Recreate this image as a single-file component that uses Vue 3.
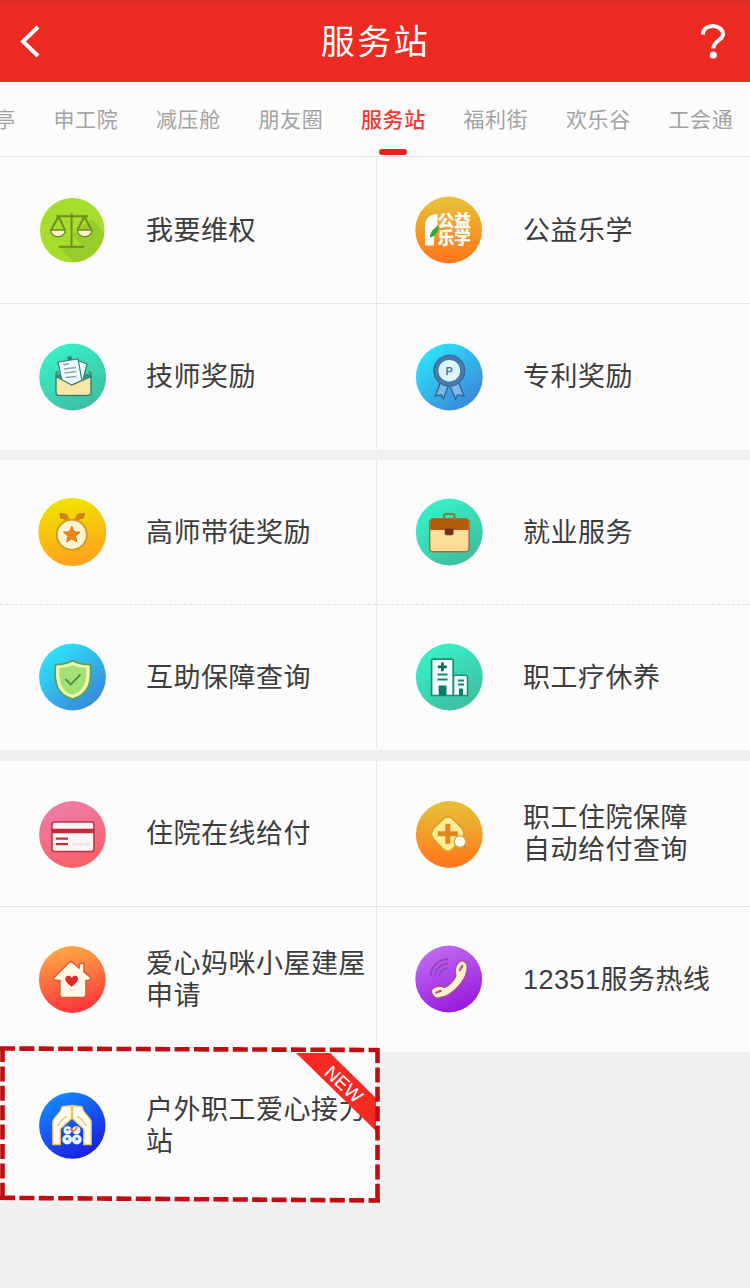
<template>
  <div class="page">
    <svg class="sprite" width="0" height="0" aria-hidden="true">
      <defs>
        <linearGradient v-for="g in gradients" :id="`g-${g.id}`" :key="g.id" :x1="g.x" y1="0" :x2="1 - g.x" y2="1">
          <stop offset="0.08" :stop-color="g.from" />
          <stop offset="0.92" :stop-color="g.to" />
        </linearGradient>
      </defs>

      <symbol id="i-scale" viewBox="0 0 68 68">
        <circle cx="34.3" cy="34.3" r="32.3" fill="#a6dc2c" />
        <path d="M54 23 66 37a32.3 32.3 0 0 1-30 29L21 51h25L34 39Z" fill="#8fc32b" opacity=".65" />
        <path d="M12.7 34h14.6c0 9-14.6 9-14.6 0ZM39.3 34h14.6c0 9-14.6 9-14.6 0Z" fill="#fff3c8" stroke="#728a22" stroke-width="1.4" />
        <path d="M18.5 20.3H50M33.6 17.3v33.2M20.7 20.3 13 34M20.7 20.3 27 34M46.3 20.3 39.6 34M46.3 20.3 53.6 34M20.7 50.7H46" fill="none" stroke="#728a22" stroke-width="1.9" />
      </symbol>

      <symbol id="i-study" viewBox="0 0 68 68">
        <circle cx="33.7" cy="34" r="33.4" fill="url(#g-orange)" />
        <path d="M10 49.5V30c0-7 4-11.8 12.5-12v11c-4 4-3 8-3.5 20.5Z" fill="#fff" />
        <path d="M15 41.5c0-5 3-9 8.5-11.5 0 6-2.5 10-8.5 11.5Z" fill="#23ad35" />
        <text x="22.8" y="31" class="glyph">公益</text>
        <text x="22.8" y="47.5" class="glyph">乐学</text>
      </symbol>

      <symbol id="i-mail" viewBox="0 0 68 68">
        <circle cx="34.7" cy="34" r="33.4" fill="url(#g-teal)" />
        <path d="M18 31h35v18.5q0 3-3 3H21q-3 0-3-3Z" fill="#2f9480" />
        <path d="m39 17 10 4-6 24-10-3Z" fill="#e8fafb" stroke="#28816f" stroke-width="1.2" />
        <path d="m29 14 4-1 2 5-4 1Z" fill="#327c75" />
        <path d="m20 19 20-3 4 22-10 6-10-6Z" fill="#effbff" stroke="#367f7a" stroke-width="1.2" />
        <path d="m25 22 6-1m-5 5 12-1.5M26.5 30l12-1.5m-11 6 11-1" stroke="#8aa9b4" stroke-width="1.5" />
        <path d="M18 33.5 33.8 42 53 33.5v16q0 3-3 3H21q-3 0-3-3Z" fill="#fbe6a7" stroke="#39836a" stroke-width="1.4" />
        <path d="M18 34v-3q0-2 2.5-2.2M53 34v-3q0-2-2.5-2.2" fill="none" stroke="#39836a" stroke-width="1.4" />
      </symbol>

      <symbol id="i-patent" viewBox="0 0 68 68">
        <circle cx="34.3" cy="34" r="33.4" fill="url(#g-blue)" />
        <path d="m25.5 39-5 14 5.5-1.2 2.5 4L34 41l6.5 14.8 2.5-4 6 1.2-6-15Z" fill="#7eb8e8" stroke="#34679b" stroke-width="1.5" />
        <circle cx="34.3" cy="27.7" r="13.3" fill="#dff6ff" stroke="#447aaf" stroke-width="5" />
        <circle cx="34.3" cy="27.7" r="15.7" fill="none" stroke="#31659a" />
        <text x="30.5" y="31.8" class="letter">P</text>
      </symbol>

      <symbol id="i-medal" viewBox="0 0 68 68">
        <circle cx="34.3" cy="34" r="34" fill="url(#g-yellow)" />
        <path d="m22 15.5 6 .7 3.5 5.5h5l3.7-5.5 6.3-.7-1.3 4.5-3.4.8-4.3 5H29.4l-3-5-3.7-.8Z" fill="#d98217" stroke="#b76b10" stroke-width=".8" />
        <circle cx="33.8" cy="36.8" r="15" fill="#fff3cf" stroke="#cb9c25" stroke-width="1.8" />
        <path d="m33.8 28.3 2.3 5.5 6 .4-4.6 3.9 1.5 5.8-5.2-3.2-5.1 3.2 1.4-5.8-4.6-3.9 6-.4Z" fill="#ef861a" stroke="#cd751c" />
      </symbol>

      <symbol id="i-case" viewBox="0 0 68 68">
        <circle cx="34.3" cy="34" r="33.4" fill="url(#g-teal)" />
        <path d="M29 21v-3q0-2 2-2h6.5q2 0 2 2v3" fill="none" stroke="#80803d" stroke-width="2.2" />
        <rect x="14.7" y="20.7" width="39.4" height="33" rx="3.5" fill="#fbdc98" stroke="#9a7434" stroke-width="1.5" />
        <path d="M15.2 32V24q0-3 3-3h32.5q3 0 3 3v8Z" fill="#b35c0e" />
        <path d="M29.7 30.5h8.8v4.7q0 2-2 2h-4.8q-2 0-2-2Z" fill="#743122" />
      </symbol>

      <symbol id="i-shield" viewBox="0 0 68 68">
        <circle cx="34.5" cy="34" r="33.4" fill="url(#g-blue)" />
        <path d="M34.5 17.7q8 4 17.8 3.8c1.8 18-1.5 30-17.8 34.5C18.5 51.5 15.8 39.5 17.6 21.5q9 .2 16.9-3.8Z" fill="#eff9b0" stroke="#55a253" stroke-width="1.7" />
        <path d="M34.5 22q6.5 3 13.8 3c.6 14-2.3 23.5-13.8 27-11.5-3.5-13.8-13-13.2-27q7 0 13.2-3Z" fill="#a4e179" />
        <path d="m27.3 36 5.4 5.5 9.8-10" fill="none" stroke="#4d9844" stroke-width="2" />
      </symbol>

      <symbol id="i-building" viewBox="0 0 68 68">
        <circle cx="34.3" cy="34" r="33.4" fill="url(#g-teal)" />
        <path d="M38.5 52.5V34q0-1.8 1.8-1.8h10.4q1.8 0 1.8 1.8v18.5Z" fill="#effdfc" stroke="#218c76" stroke-width="1.5" />
        <path d="M16.6 52.5V18q0-1.8 1.8-1.8h18q1.8 0 1.8 1.8v34.5Z" fill="#effdfc" stroke="#218c76" stroke-width="1.7" />
        <path d="M27.4 19.5v8.8M23 23.9h8.8" stroke="#0d6e5b" stroke-width="2.8" />
        <path d="M22.5 31.5h10M22.5 36.5h10M43 37.5h6M43 41.5h6" stroke="#178574" stroke-width="2" />
        <path d="M23.7 42.5h7.8v10h-7.8ZM44 45.5h4v7h-4Z" fill="#087c68" />
      </symbol>

      <symbol id="i-card" viewBox="0 0 68 68">
        <circle cx="34.5" cy="34.5" r="33.4" fill="url(#g-pink)" />
        <rect x="14" y="22" width="42" height="29.5" rx="2.5" fill="#fff5f4" stroke="#b83547" stroke-width="1.6" />
        <path d="M14 28.8h42v4.5H14Z" fill="#c52936" />
        <path d="M18 38.7h12M18 44.2h12" stroke="#c3313d" stroke-width="2.3" />
        <path d="M34 44.2h18" stroke="#f5d3d9" stroke-width="1.2" />
      </symbol>

      <symbol id="i-search" viewBox="0 0 68 68">
        <circle cx="34.3" cy="34.5" r="33.4" fill="url(#g-orange)" />
        <path d="M28.5 18.7q4.5-4 9 0l9.5 9.5q4 5 0 10L37 49.5q-4 3.5-8.5 0l-10-10.5q-4-5 0-10.5Z" fill="#ffed9b" stroke="#dda025" stroke-width="1.7" />
        <path d="M32.8 23.7v20M22.8 33.7h20" stroke="#df871d" stroke-width="5" />
        <circle cx="45" cy="41.7" r="5.8" fill="#fffdf2" stroke="#d7a44a" stroke-width="1.4" />
        <path d="m49 46 2.8 3" stroke="#b68939" stroke-width="1.6" />
      </symbol>

      <symbol id="i-home" viewBox="0 0 68 68">
        <circle cx="34.3" cy="34.5" r="33.4" fill="url(#g-red)" />
        <path d="M31 17.6q1.8-1.6 3.6 0l6.5 5.6.6-4.4 4.2-1v9.2l5.8 4.6q2 2.4-.8 3.6l-3 .2v14.4q0 2.6-2.6 2.6h-20.700q-2.6 0-2.600-2.600V35.500l-4.500-.2q-3-1-.8-3.400Z" fill="#fff8e9" stroke="#d65b2b" stroke-width="1.4" />
        <path d="M33.7 41.8c-2.500-2.200-6.400-4.600-6.400-8 0-3.500 4.700-4.200 6.400-1 1.700-3.200 6.400-2.500 6.400 1 0 3.400-3.900 5.800-6.400 8Z" fill="#df2b28" />
        <path d="M31 45h6" stroke="#f8c9b6" />
      </symbol>

      <symbol id="i-phone" viewBox="0 0 68 68">
        <circle cx="33.7" cy="34" r="33.4" fill="url(#g-purple)" />
        <path d="M40 26.500c.3-4 2-8.500 5-10.200 3-1.500 7 .6 7.200 4.200.6 5.500-2 13-7 19C39.500 46.500 31 52.500 22.500 53.300c-3.300 0-6.300-4.300-6.200-7.500.4-3 5.700-4.800 9.700-4.500 2 .2 2.300 1.600 4 .8 4.500-2.200 8.500-6.200 10.700-11 .6-1.700-.9-2.700-.7-4.600Z" fill="#fff1cf" stroke="#a54b91" stroke-width="1.5" />
        <path d="m20.500 48 6-2.600m18-19.600 3.300-5.600" stroke="#b45b71" stroke-width="2.200" />
        <path d="M15.500 31c.5-9.500 8-16.500 17.500-16.800M19.800 31c.6-7 6-12 13-12.400M24.500 31c.6-4.600 4-7.500 8.300-8" fill="none" stroke="#8d43bd" stroke-width="1.700" />
      </symbol>

      <symbol id="i-hands" viewBox="0 0 68 68">
        <circle cx="34.3" cy="34.500" r="33.200" fill="url(#g-royal)" />
        <path d="M14.800 53.500V31q0-2 1.400-3.400L22.500 20l1.500-4.500 9.400-1v13.200L22.300 38v15.500ZM53.200 53.500V31q0-2-1.400-3.400L45.500 20 44 15.500l-9.400-1v13.200L45.700 38v15.500Z" fill="#fffdf5" stroke="#e8c65a" stroke-width="1.300" />
        <path d="m19.500 35 4.500-6.500 5-3M48.500 35 44 28.500l-5-3" fill="none" stroke="#e5bc58" stroke-width="1.200" />
        <circle cx="29.600" cy="39.200" r="4" fill="#fff" />
        <circle cx="38.400" cy="39.200" r="4" fill="#fff" />
        <circle cx="29.600" cy="38.800" r="1.400" fill="#5f8ed7" />
        <path d="m32 37.500 3.500 3 4-4.500" fill="none" stroke="#e77b42" stroke-width="1.800" />
        <circle cx="29.200" cy="48.500" r="4.900" fill="#e8f6ff" />
        <circle cx="38.800" cy="48.500" r="4.900" fill="#e8f6ff" />
        <circle cx="29.200" cy="47.700" r="1.500" fill="#397de4" />
        <circle cx="38.800" cy="47.700" r="1.500" fill="#397de4" />
      </symbol>
    </svg>

    <header class="header">
      <button type="button" class="header__btn" aria-label="返回">
        <svg width="24" height="34" viewBox="0 0 24 34"><path d="M20 3 5 17.500 20 32" fill="none" stroke="#fff" stroke-width="4" /></svg>
      </button>
      <h1 class="header__title">服务站</h1>
      <button type="button" class="header__btn" aria-label="帮助">
        <svg width="26" height="36" viewBox="0 0 26 36">
          <path d="M3 11.500C3 6 7 3 12.700 3S23 6.500 23 11c0 6.500-9.500 7-9.500 13.500v1" fill="none" stroke="#fff" stroke-width="4" />
          <circle cx="13.300" cy="32" r="3.600" fill="#fff" />
        </svg>
      </button>
    </header>

    <nav class="tabs">
      <a v-for="tab in tabs" :key="tab" class="tabs__item" :class="{ 'is-active': tab === active }" @click="active = tab">{{ tab }}</a>
    </nav>

    <main>
      <section v-for="(group, i) in groups" :key="i" class="group">
        <div v-for="item in group" :key="item.label" class="cell" :class="{ 'cell--new': item.isNew }">
          <svg class="cell__icon" width="68" height="68"><use :href="`#i-${item.icon}`" /></svg>
          <span class="cell__label">{{ item.label }}</span>
          <template v-if="item.isNew">
            <svg class="cell__ribbon" width="80" height="80" viewBox="0 0 80 80">
              <path d="M0 0h34l46 45v33Z" fill="#f52a22" />
              <text x="48" y="38" transform="rotate(43 48 31)" text-anchor="middle">NEW</text>
            </svg>
            <svg class="cell__frame" width="382" height="158" viewBox="0 0 382 158">
              <path d="M0 3.500 378 5" />
              <path d="M2.500 2v150" />
              <path d="M377.500 3v153" />
              <path d="M0 152.800 380 155.500" />
            </svg>
          </template>
        </div>
      </section>
    </main>
  </div>
</template>

<script setup>
import { ref } from 'vue'

const active = ref('服务站')
const tabs = ['职工亭', '申工院', '减压舱', '朋友圈', '服务站', '福利街', '欢乐谷', '工会通']

const gradients = [
  { id: 'orange', x: 0.5, from: '#e8bd35', to: '#ff7a1c' },
  { id: 'teal', x: 0.2, from: '#38f0c6', to: '#3ebfa2' },
  { id: 'blue', x: 0.1, from: '#2de5f8', to: '#3a86dc' },
  { id: 'yellow', x: 0.4, from: '#f1df00', to: '#ffa31c' },
  { id: 'pink', x: 0.3, from: '#ed7ba6', to: '#fb6067' },
  { id: 'red', x: 0.4, from: '#ffa044', to: '#fc3a3d' },
  { id: 'purple', x: 0.3, from: '#bd66f0', to: '#9a1ddf' },
  { id: 'royal', x: 0.2, from: '#1485ff', to: '#1b20e2' },
]

const groups = [
  [
    { icon: 'scale', label: '我要维权' },
    { icon: 'study', label: '公益乐学' },
    { icon: 'mail', label: '技师奖励' },
    { icon: 'patent', label: '专利奖励' },
  ],
  [
    { icon: 'medal', label: '高师带徒奖励' },
    { icon: 'case', label: '就业服务' },
    { icon: 'shield', label: '互助保障查询' },
    { icon: 'building', label: '职工疗休养' },
  ],
  [
    { icon: 'card', label: '住院在线给付' },
    { icon: 'search', label: '职工住院保障\n自动给付查询' },
    { icon: 'home', label: '爱心妈咪小屋建屋申请' },
    { icon: 'phone', label: '12351服务热线' },
    { icon: 'hands', label: '户外职工爱心接力站', isNew: true },
  ],
]
</script>

<style>
body {
  margin: 0;
  background: #f0f0f0;
}
</style>

<style scoped>
.page {
  width: 750px;
  height: 1288px;
  overflow: hidden;
  background: #f0f0f0;
  color: #3c3c3c;
  font-family: "Liberation Sans", "Noto Sans CJK SC", sans-serif;
}

.sprite {
  position: absolute;
}

.glyph {
  fill: #fff;
  stroke: #fff;
  stroke-width: 0.4px;
  font-size: 16.5px;
  font-weight: 700;
}

.letter {
  fill: #477aa7;
  font-size: 11px;
  font-weight: 700;
}

.header {
  display: flex;
  align-items: center;
  justify-content: space-between;
  box-sizing: border-box;
  height: 82px;
  padding: 0 22px 0 18px;
  background: linear-gradient(#dc2d22, #ec2a22 8px);
}

.header__btn {
  display: flex;
  width: 28px;
  padding: 0;
  border: 0;
  background: transparent;
}

.header__title {
  margin: 0;
  padding: 3px 0 0 5px;
  color: #fff;
  font-size: 34px;
  font-weight: 400;
  letter-spacing: 2.5px;
  line-height: 79px;
}

.tabs {
  display: flex;
  justify-content: flex-end;
  gap: 37.4px;
  box-sizing: border-box;
  height: 75px;
  padding-right: 16.5px;
  border-bottom: 1px solid #e0e1eb;
  background: #fcfcfc;
}

.tabs__item {
  position: relative;
  flex: none;
  color: #a3a3a3;
  font-size: 21px;
  letter-spacing: 0.7px;
  line-height: 75px;
}

.tabs__item.is-active {
  color: #f03a35;
  font-weight: 500;
}

.tabs__item.is-active::after {
  content: '';
  position: absolute;
  bottom: 1px;
  left: 50%;
  width: 28px;
  height: 6px;
  margin-left: -14px;
  border-radius: 3px;
  background: #ec211c;
}

.group {
  display: grid;
  grid-template-columns: 376px 374px;
  grid-auto-rows: 145px;
}

.group + .group {
  margin-top: 11px;
}

.group:nth-child(1) {
  grid-template-rows: 147px 146px;
}

.group:nth-child(2) {
  margin-top: 10px;
}

.group:nth-child(3) {
  grid-template-rows: 146px 145px 147px;
}

.cell {
  position: relative;
  display: flex;
  align-items: center;
  box-sizing: border-box;
  padding-left: 38px;
  border-bottom: 1px solid #e2e2ea;
  background: #fcfcfc;
}

.cell:nth-child(even) {
  padding-left: 39px;
}

.cell:nth-child(even)::before {
  content: '';
  position: absolute;
  top: 0;
  bottom: 0;
  left: 0;
  width: 1px;
  background: #e8e8f0;
}

.group:nth-child(2) .cell:nth-child(-n + 2) {
  border-bottom-style: dashed;
}

.cell:nth-child(n + 3) {
  border-bottom-color: transparent;
}

.cell__icon {
  flex: none;
}

.cell__label {
  padding-top: 1px;
  margin-left: 40px;
  font-size: 27px;
  letter-spacing: 0.5px;
  line-height: 32px;
  white-space: pre-line;
}

.cell__ribbon {
  position: absolute;
  top: 1px;
  right: 0;
}

.cell__ribbon text {
  fill: #fff;
  font-size: 19px;
}

.cell__frame {
  position: absolute;
  top: -7px;
  left: 0;
}

.cell__frame path {
  fill: none;
  stroke: #bf0d12;
  stroke-width: 4.6;
  stroke-dasharray: 15 4.4;
}
</style>
